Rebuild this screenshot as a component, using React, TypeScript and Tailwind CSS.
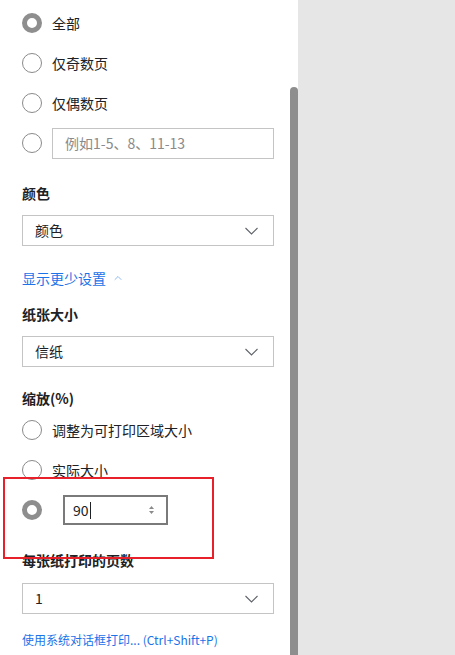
import { ChevronUp } from "lucide-react";

const font = { fontFamily: '"Microsoft YaHei", "Noto Sans CJK SC", "Liberation Sans", sans-serif' };

function Radio({ checked }: { checked?: boolean }) {
  return checked ? (
    <span className="block h-5 w-5 shrink-0 rounded-full border-[5px] border-[#8e8e8e] bg-white" />
  ) : (
    <span className="block h-5 w-5 shrink-0 rounded-full border border-[#8a8a8a] bg-white" />
  );
}

function RadioRow({ label, checked, children }: { label?: string; checked?: boolean; children?: React.ReactNode }) {
  return (
    <div className="flex h-10 items-center">
      <Radio checked={checked} />
      {label && <span className="ml-[10px] text-[14px] text-[#202124]">{label}</span>}
      {children}
    </div>
  );
}

function Label({ text, className }: { text: string; className?: string }) {
  return <div className={`flex h-5 items-center text-[14px] font-bold text-[#202124] ${className ?? ""}`}>{text}</div>;
}

function Select({ value, className }: { value: string; className?: string }) {
  return (
    <div
      className={`flex h-[31px] w-[252px] shrink-0 items-center justify-between border border-[#c4c4c4] bg-white pl-3 pr-[15px] text-[14px] text-[#202124] ${className ?? ""}`}
    >
      <span>{value}</span>
      <svg width="13" height="8" viewBox="0 0 13 8" className="text-[#5f6368]">
        <path d="M0.5 1L6.5 7L12.5 1" fill="none" stroke="currentColor" strokeWidth="1.1" />
      </svg>
    </div>
  );
}

export default function App() {
  return (
    <div className="flex h-[655px] w-[455px] overflow-hidden bg-[#e6e6e6]" style={font}>
      <div className="relative flex w-[298px] bg-white">
        <div className="w-[290px] shrink-0 px-[22px] pt-[3px]">
          <RadioRow label="全部" checked />
          <RadioRow label="仅奇数页" />
          <RadioRow label="仅偶数页" />
          <RadioRow>
            <div className="ml-[10px] flex h-[31px] w-[222px] shrink-0 items-center border border-[#c4c4c4] px-3 text-[14px] text-[#8a8a8a]">
              例如1-5、8、11-13
            </div>
          </RadioRow>

          <Label text="颜色" className="mt-5" />
          <Select value="颜色" className="mt-3" />

          <div className="mt-[22px] flex h-5 items-center gap-[6px] text-[14px] text-[#1a73e8]">
            <span>显示更少设置</span>
            <ChevronUp size={12} strokeWidth={1.5} className="text-[#6aa3ec]" />
          </div>

          <Label text="纸张大小" className="mt-4" />
          <Select value="信纸" className="mt-3" />

          <Label text="缩放(%)" className="mt-[21px]" />
          <div className="mt-[2px]">
            <RadioRow label="调整为可打印区域大小" />
            <RadioRow label="实际大小" />
            <RadioRow checked>
              <div className="ml-[21px] flex h-[30px] w-[105px] shrink-0 items-center justify-between border-2 border-[#7a7a7a] pl-[8px] pr-[12px] text-[14px] text-[#202124]">
                <span className="flex items-center">
                  90<span className="ml-px inline-block h-[17px] w-px bg-[#202124]" />
                </span>
                <span className="flex flex-col items-center gap-[2px] text-[#8a8a8a]">
                  <svg width="5" height="3" viewBox="0 0 5 3"><path d="M0 3L2.5 0L5 3Z" fill="currentColor" /></svg>
                  <svg width="5" height="3" viewBox="0 0 5 3"><path d="M0 0L2.5 3L5 0Z" fill="currentColor" /></svg>
                </span>
              </div>
            </RadioRow>
          </div>

          <Label text="每张纸打印的页数" className="mt-5" />
          <Select value="1" className="mt-[13px]" />

          <div className="mt-4 flex h-5 items-center whitespace-nowrap text-[12px] text-[#1a73e8]">
            使用系统对话框打印... (Ctrl+Shift+P)
          </div>
        </div>
        <div className="flex w-2 flex-col">
          <div className="h-[87px]" />
          <div className="flex-1 rounded-t-full bg-[#8e8e8e]" />
        </div>
        <div className="pointer-events-none absolute left-[3px] top-[477px] h-[82px] w-[211px] border-2 border-[#e8202a]" />
      </div>
      <div className="flex-1" />
    </div>
  );
}
